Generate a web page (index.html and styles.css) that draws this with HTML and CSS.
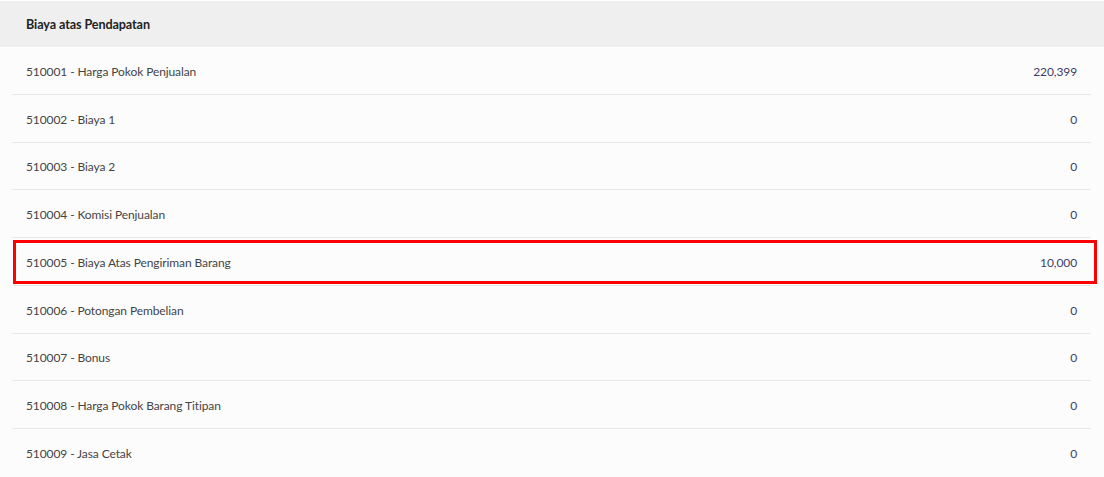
FILE: index.html
```html
<!DOCTYPE html>
<html>
<head>
<meta charset="utf-8">
<link rel="stylesheet" href="styles.css">
</head>
<body>
<section class="report">
  <div class="section-head">Biaya atas Pendapatan</div>
  <div class="rows">
    <div class="row"><span class="label">510001 - Harga Pokok Penjualan</span><span class="amount">220,399</span></div>
    <div class="row"><span class="label">510002 - Biaya 1</span><span class="amount">0</span></div>
    <div class="row"><span class="label">510003 - Biaya 2</span><span class="amount">0</span></div>
    <div class="row"><span class="label">510004 - Komisi Penjualan</span><span class="amount">0</span></div>
    <div class="row highlight"><span class="label">510005 - Biaya Atas Pengiriman Barang</span><span class="amount">10,000</span></div>
    <div class="row"><span class="label">510006 - Potongan Pembelian</span><span class="amount">0</span></div>
    <div class="row"><span class="label">510007 - Bonus</span><span class="amount">0</span></div>
    <div class="row"><span class="label">510008 - Harga Pokok Barang Titipan</span><span class="amount">0</span></div>
    <div class="row"><span class="label">510009 - Jasa Cetak</span><span class="amount">0</span></div>
  </div>
</section>
</body>
</html>
```

FILE: styles.css
```css
html, body {
  margin: 0;
  padding: 0;
  background: #fcfcfc;
  font-family: "Lato", "Noto Sans", sans-serif;
  font-size: 12px;
  letter-spacing: -0.1px;
  color: #444;
}
.report {
  padding-top: 1px;
}
.section-head {
  height: 46px;
  display: flex;
  align-items: center;
  padding: 0 26px;
  background: #efefef;
  font-weight: 700;
  font-size: 12.6px;
  color: #222;
}
.rows {
  margin: 0 13px 0 12px;
}
.row {
  position: relative;
  box-sizing: border-box;
  height: 47.75px;
  display: flex;
  align-items: center;
  justify-content: space-between;
  padding: 2px 14px 0;
  border-bottom: 1px solid #e8e8e8;
}
.row:last-child {
  border-bottom: none;
}
.amount {
  color: #3d3d66;
}
.highlight::after {
  content: "";
  position: absolute;
  left: 1px;
  right: -6px;
  top: 2px;
  bottom: 1px;
  border: 3px solid #ff0000;
  pointer-events: none;
}
```
